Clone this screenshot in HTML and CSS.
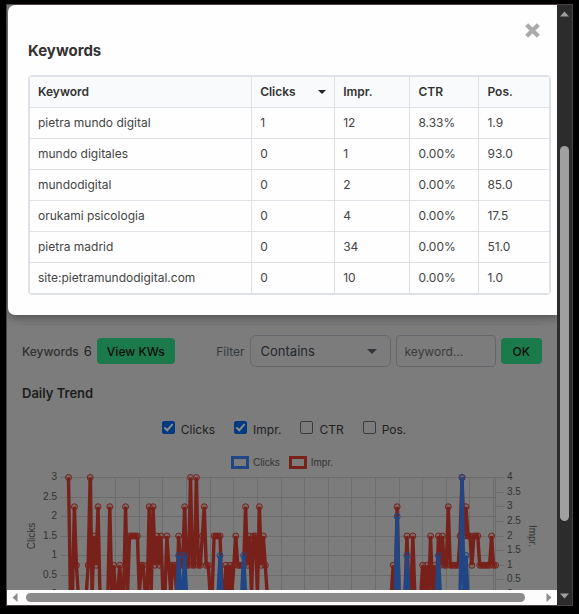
FILE: index.html
```html
<!DOCTYPE html>
<html lang="en">
<head>
<meta charset="utf-8">
<title>Keywords</title>
<link rel="stylesheet" href="styles.css">
</head>
<body>
<div class="frame">
  <div class="pane">
    <section class="modal" role="dialog" aria-labelledby="modal-title">
      <button class="close" type="button" aria-label="Close">
        <svg viewBox="0 0 16 16" width="17" height="17"><path d="M2.500 2.500 13.500 13.500M13.500 2.500 2.500 13.500" stroke="#aaa" stroke-width="4"/></svg>
      </button>
      <h2 id="modal-title">Keywords</h2>
      <div class="table-wrap">
        <table>
          <colgroup><col class="c-key"><col class="c-clicks"><col class="c-impr"><col class="c-ctr"><col class="c-pos"></colgroup>
          <thead>
            <tr><th>Keyword</th><th class="sorted">Clicks</th><th>Impr.</th><th>CTR</th><th>Pos.</th></tr>
          </thead>
          <tbody>
            <tr><td>pietra mundo digital</td><td>1</td><td>12</td><td>8.33%</td><td>1.9</td></tr>
            <tr><td>mundo digitales</td><td>0</td><td>1</td><td>0.00%</td><td>93.0</td></tr>
            <tr><td>mundodigital</td><td>0</td><td>2</td><td>0.00%</td><td>85.0</td></tr>
            <tr><td>orukami psicologia</td><td>0</td><td>4</td><td>0.00%</td><td>17.5</td></tr>
            <tr><td>pietra madrid</td><td>0</td><td>34</td><td>0.00%</td><td>51.0</td></tr>
            <tr><td>site:pietramundodigital.com</td><td>0</td><td>10</td><td>0.00%</td><td>1.0</td></tr>
          </tbody>
        </table>
      </div>
    </section>

    <main class="page">
      <form class="controls">
        <span class="kw-label">Keywords</span>
        <span class="kw-count">6</span>
        <button class="btn" type="button">View KWs</button>
        <label class="filter-label" for="mode">Filter</label>
        <div class="select-wrap">
          <select id="mode"><option>Contains</option></select>
        </div>
        <input class="kw-input" type="text" placeholder="keyword..." aria-label="Keyword">
        <button class="btn ok" type="button">OK</button>
      </form>
      <h3>Daily Trend</h3>
      <div class="toggles">
        <label><input type="checkbox" checked><span>Clicks</span></label>
        <label><input type="checkbox" checked><span>Impr.</span></label>
        <label><input type="checkbox"><span>CTR</span></label>
        <label><input type="checkbox"><span>Pos.</span></label>
      </div>
      <div class="legend">
        <span class="key clicks">Clicks</span>
        <span class="key impr">Impr.</span>
      </div>
      <svg id="chart" class="chart" viewBox="0 0 520 160"></svg>
    </main>
  </div>
  <div class="vbar">
    <svg viewBox="0 0 9 6" width="9" height="6"><path d="M0 5.500 4.500 0.500 9 5.500z" fill="#a0a0a0"/></svg>
    <div class="vtrack"><div class="vthumb"></div></div>
    <svg viewBox="0 0 9 6" width="9" height="6"><path d="M0 .5 4.500 5.500 9 .5z" fill="#a0a0a0"/></svg>
  </div>
  <div class="hbar">
    <svg viewBox="0 0 6 9" width="6" height="9"><path d="M5.500 0 .5 4.500 5.500 9z" fill="#8b8b8b"/></svg>
    <div class="hthumb"></div>
    <svg viewBox="0 0 6 9" width="6" height="9"><path d="M.5 0 5.500 4.500 .5 9z" fill="#8b8b8b"/></svg>
  </div>
</div>
<script src="chart.js"></script>
</body>
</html>
```
FILE: styles.css
```css
*,
*::before,
*::after {
  box-sizing: border-box;
}

body {
  margin: 0;
  padding: 4px 6px 8px;
  height: 100vh;
  background: #000;
  color: #212121;
  font-family: Inter, "Liberation Sans", sans-serif;
  font-size: 12px;
}

.frame {
  display: grid;
  grid-template-columns: 1fr 15px;
  grid-template-rows: 1fr 15px;
  height: 100%;
  border: 1px solid #4c4242;
  background: #2c2c2c;
}

.pane {
  min-width: 0;
  min-height: 0;
  overflow: hidden;
  background: #7c7c7c;
}

.modal {
  position: relative;
  margin-left: 1px;
  padding: 36px 6px 20px 20px;
  border-radius: 7px 0 0 7px;
  background: #fefefe;
  box-shadow: 0 3px 8px rgba(0, 0, 0, 0.35);
}

.close {
  position: absolute;
  top: 17px;
  right: 16px;
  padding: 0;
  border: 0;
  background: none;
  line-height: 0;
}

h2 {
  margin: 0 0 14px;
  font-size: 15px;
  line-height: 20px;
  font-weight: 700;
  color: #333;
}

.table-wrap {
  border: 1px solid #dee2e6;
  border-radius: 4px;
  overflow: hidden;
}

table {
  width: 100%;
  table-layout: fixed;
  border-collapse: separate;
  border-spacing: 0;
  border: 1px solid #dee2e6;
  color: #444;
  font-size: 12px;
}

.c-key { width: 42.8%; }
.c-clicks { width: 16%; }
.c-impr { width: 14.5%; }
.c-ctr { width: 13.3%; }
.c-pos { width: 13.4%; }

th,
td {
  height: 31px;
  padding: 0 8px;
  border-right: 1px solid #dee2e6;
  border-bottom: 1px solid #dee2e6;
  text-align: left;
  line-height: 20px;
}

th {
  background: #f8fafc;
  color: #333;
  font-weight: 600;
}

th:last-child,
td:last-child {
  border-right: 0;
}

tbody tr:last-child td {
  height: 30px;
  border-bottom: 0;
}

.sorted::after {
  content: "";
  float: right;
  margin-top: 8px;
  border: 4px solid transparent;
  border-top-color: #222;
  border-bottom: 0;
}

.page {
  margin: 9px 15px 0;
  border-top: 1px solid #757575;
}

.controls {
  display: flex;
  align-items: center;
  gap: 5px;
  margin-top: 10px;
}

.kw-label {
  color: #303030;
  font-weight: 500;
}

.kw-count {
  font-size: 13px;
}

.btn {
  height: 26px;
  padding: 0 10px;
  border: 0;
  border-radius: 4px;
  background: #1b7a4b;
  color: #0c0c0c;
  font: 500 12px Inter, "Liberation Sans", sans-serif;
}

.ok {
  padding: 0 12px;
}

.filter-label {
  margin-left: auto;
  color: #363a3e;
}

.select-wrap {
  position: relative;
  width: 141px;
}

.select-wrap::after {
  content: "";
  position: absolute;
  top: 14px;
  right: 14px;
  border: 5px solid transparent;
  border-top-color: #33373b;
  border-bottom: 0;
  pointer-events: none;
}

select,
.kw-input {
  appearance: none;
  height: 32px;
  padding: 0 10px;
  border: 1px solid #64676c;
  background: transparent;
  color: #25282c;
}

select {
  display: block;
  width: 100%;
  border-radius: 6px;
  font: 13px Inter, "Liberation Sans", sans-serif;
}

.kw-input {
  width: 100px;
  padding: 0 8px;
  border-radius: 4px;
  font: 12px Inter, "Liberation Sans", sans-serif;
}

.kw-input::placeholder {
  color: #3b3b3b;
}

h3 {
  margin: 16px 0 0;
  font-size: 13px;
  line-height: 20px;
  font-weight: 600;
  color: #1c1c1c;
}

.toggles {
  display: flex;
  justify-content: center;
  gap: 19px;
  margin: 17px 0 0 4px;
  height: 20px;
}

.toggles label {
  display: flex;
  align-items: flex-start;
  gap: 6px;
  line-height: 20px;
}

.toggles input {
  appearance: none;
  width: 13px;
  height: 13px;
  margin: 1px 0 0;
  border: 1px solid #3b3b3b;
  border-radius: 2px;
}

.toggles input:checked {
  border-color: #003a80;
  background: #003a80;
}

.toggles input:checked::before {
  content: "";
  display: block;
  width: 5px;
  height: 9px;
  margin-left: 3px;
  border: solid #8c8c8c;
  border-width: 0 2px 2px 0;
  transform: rotate(42deg);
}

.legend {
  display: flex;
  justify-content: center;
  gap: 9px;
  margin-top: 16px;
  color: #333;
  font: 10px "Liberation Sans", sans-serif;
}

.key {
  display: flex;
  align-items: center;
  gap: 4px;
}

.key::before {
  content: "";
  width: 18px;
  height: 13px;
  border: 3px solid #214686;
}

.impr::before {
  border-color: #78211b;
}

.chart {
  display: block;
  width: 100%;
  font: 10px "Liberation Sans", sans-serif;
}

.vbar {
  grid-row: 1 / 3;
  grid-column: 2;
  display: flex;
  flex-direction: column;
  align-items: center;
  justify-content: space-between;
  padding: 6px 0;
}

.vtrack {
  display: flex;
  flex: 1;
  flex-direction: column;
  padding: 4px 0;
}

.vtrack::before {
  content: "";
  height: 22%;
}

.vthumb {
  width: 9px;
  height: 66%;
  border-radius: 5px;
  background: #a0a0a0;
}

.hbar {
  grid-row: 2;
  display: flex;
  align-items: center;
  gap: 8px;
  padding: 0 5px;
  background: #fcfcfc;
}

.hthumb {
  flex: 1;
  height: 9px;
  margin-right: 13px;
  border-radius: 5px;
  background: #8b8b8b;
}
```
FILE: chart.js
```js
const NS = "http://www.w3.org/2000/svg";
const chart = document.getElementById("chart");
const LEFT = 46.5, TOP = 8.5, ZERO = 125.5, STEP = 427 / 217, LAST = 217;

// Days with impressions, as day:count; every other day is zero.
const impressions = "0:4 3:3 4:1 10:1 11:4 13:2 14:1 15:3 21:3 23:1 26:1 29:3 31:2 32:2 33:2 34:2 35:2 37:1 38:1 " +
  "41:3 43:3 44:1 45:2 46:1 47:2 50:2 51:1 53:1 54:1 56:2 57:1 58:1 59:3 60:1 61:1 62:4 63:1 64:1 65:4 66:1 67:1 68:2 69:3 70:1 71:1 " +
  "74:2 75:2 76:2 77:2 80:1 82:1 84:1 85:2 86:1 87:1 88:1 89:1 90:3 91:1 92:2 94:2 95:2 97:3 98:1 99:2 100:1 " +
  "165:1 167:3 172:2 175:2 180:1 182:1 184:2 186:1 188:2 189:1 190:2 191:1 192:1 193:3 194:1 195:1 196:1 197:1 198:1 199:2 " +
  "200:4 201:2 202:3 203:2 204:2 205:1 206:2 207:2 208:2 209:1 210:1 211:1 212:1 213:1 214:1 215:2 216:1 217:1";
const clicks = "56:1 59:1 77:1 89:1 167:2 172:1 188:1 200:3 202:1";

function add(name, attrs, text) {
  const el = document.createElementNS(NS, name);
  for (const key in attrs) el.setAttribute(key, attrs[key]);
  if (text) el.textContent = text;
  chart.appendChild(el);
}

function line(x1, y1, x2, y2) {
  add("line", { x1, y1, x2, y2, stroke: "#6c6c6c", "stroke-width": 1 });
}

function label(x, y, text, anchor) {
  add("text", { x, y, "text-anchor": anchor, fill: "#333" }, text);
}

function series(source, max, color) {
  const values = new Array(LAST + 1).fill(0);
  source.split(" ").forEach(pair => {
    const [day, count] = pair.split(":").map(Number);
    values[day] = count;
  });
  const at = (v, i) => [LEFT + i * STEP, ZERO - v / max * (ZERO - TOP)];
  add("polyline", {
    points: values.map((v, i) => at(v, i).join()).join(" "),
    fill: "none", stroke: color, "stroke-width": 3.4, "stroke-linejoin": "bevel"
  });
  values.forEach((v, i) => {
    if (!v) return;
    const [cx, cy] = at(v, i);
    add("circle", { cx, cy, r: 3, fill: color, "fill-opacity": 0.2, stroke: color, "stroke-width": 1 });
  });
}

for (let i = 0; i <= 6; i++) {
  const y = Math.floor(ZERO - i * (ZERO - TOP) / 6) + 0.5;
  line(LEFT - 8, y, 473.5, y);
  label(35, y + 2, String(i / 2), "end");
}
for (let i = 0; i <= 8; i++) {
  const y = Math.floor(ZERO - i * (ZERO - TOP) / 8) + 0.5;
  line(474, y, 482, y);
  label(485, y + 2, String(i / 2), "start");
}
for (let i = 0; i <= 216; i += 12) {
  const x = Math.floor(LEFT + i * STEP) + 0.5;
  line(x, TOP, x, ZERO);
}
line(473.5, TOP, 473.5, ZERO);

series(impressions, 4, "#78211b");
series(clicks, 3, "#214686");

add("text", { transform: "translate(13 67) rotate(-90)", "text-anchor": "middle", fill: "#333" }, "Clicks");
add("text", { transform: "translate(507 67) rotate(90)", "text-anchor": "middle", fill: "#333" }, "Impr.");
```
